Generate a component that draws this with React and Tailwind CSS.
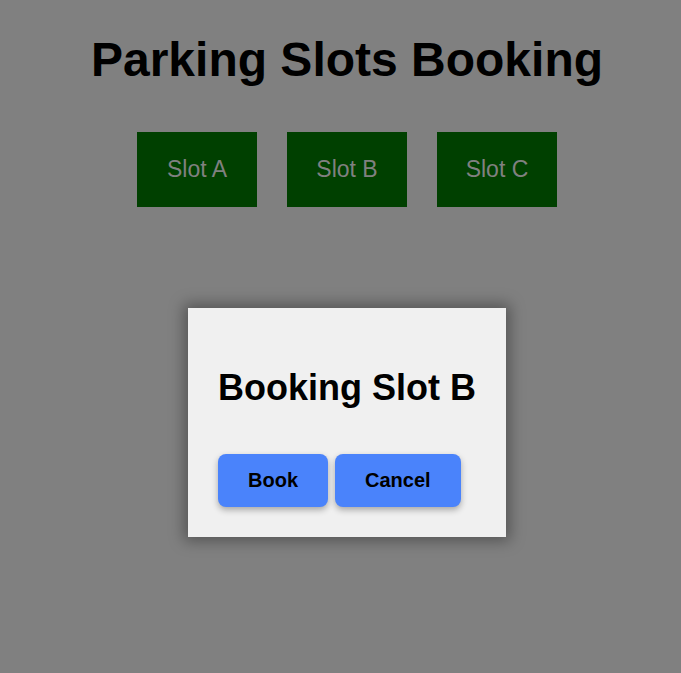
import React from 'react'

const slots = ["Slot A", "Slot B", "Slot C"];

const App = () => {
    return (
        <div className="min-h-screen bg-[#808080] pl-[13px] flex flex-col items-center" style={{ fontFamily: '"Liberation Sans", Arial, sans-serif' }}>
            <h1 className="mt-[32px] text-[48px] leading-[55px] font-bold text-black">Parking Slots Booking</h1>

            <div className="mt-[45px] flex gap-[30px]">
                {slots.map((slot) => (
                    <div
                        key={slot}
                        className="w-[120px] h-[75px] bg-[#004000] text-[#808080] text-[23px] flex items-center justify-center"
                    >
                        {slot}
                    </div>
                ))}
            </div>

            <div className="mt-[101px] bg-[#f0f0f0] px-[30px] pt-[59px] pb-[30px] shadow-[0_0_14px_4px_rgba(0,0,0,0.35)]">
                <h2 className="text-[36px] leading-[41px] font-bold text-black">Booking Slot B</h2>
                <div className="mt-[46px] flex gap-[7px]">
                    <button className="h-[53px] px-[30px] pb-[2px] rounded-[8px] bg-[#4a83fb] text-[20px] font-bold text-black shadow-[0_3px_6px_rgba(0,0,0,0.3)]">
                        Book
                    </button>
                    <button className="h-[53px] px-[30px] pb-[2px] rounded-[8px] bg-[#4a83fb] text-[20px] font-bold text-black shadow-[0_3px_6px_rgba(0,0,0,0.3)]">
                        Cancel
                    </button>
                </div>
            </div>
        </div>
    )
}

export default App
